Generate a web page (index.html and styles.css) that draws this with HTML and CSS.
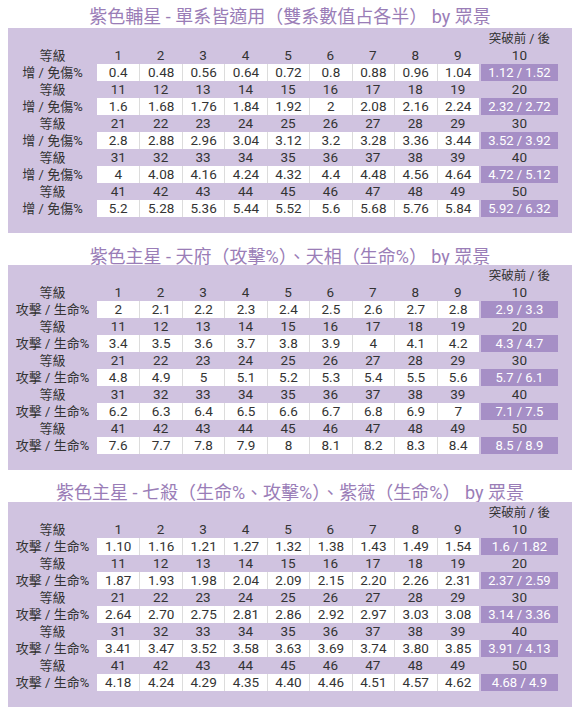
FILE: index.html
```html
<!DOCTYPE html>
<html lang="zh-Hant">
<head>
<meta charset="utf-8">
<title>紫色星 數值表</title>
<link rel="stylesheet" href="styles.css">
</head>
<body>
<div class="page">
  <h2 class="title t1">紫色輔星 - 單系皆適用（雙系數值占各半） by 眾景</h2>
  <div class="panel">
    <div class="row head"><span class="c10">突破前 / 後</span></div>
    <div class="row"><span class="lab">等級</span><span>1</span><span>2</span><span>3</span><span>4</span><span>5</span><span>6</span><span>7</span><span>8</span><span>9</span><span class="c10">10</span></div>
    <div class="row val"><span class="lab">增 / 免傷%</span><span>0.4</span><span>0.48</span><span>0.56</span><span>0.64</span><span>0.72</span><span>0.8</span><span>0.88</span><span>0.96</span><span>1.04</span><span class="c10 hi">1.12 / 1.52</span></div>
    <div class="row"><span class="lab">等級</span><span>11</span><span>12</span><span>13</span><span>14</span><span>15</span><span>16</span><span>17</span><span>18</span><span>19</span><span class="c10">20</span></div>
    <div class="row val"><span class="lab">增 / 免傷%</span><span>1.6</span><span>1.68</span><span>1.76</span><span>1.84</span><span>1.92</span><span>2</span><span>2.08</span><span>2.16</span><span>2.24</span><span class="c10 hi">2.32 / 2.72</span></div>
    <div class="row"><span class="lab">等級</span><span>21</span><span>22</span><span>23</span><span>24</span><span>25</span><span>26</span><span>27</span><span>28</span><span>29</span><span class="c10">30</span></div>
    <div class="row val"><span class="lab">增 / 免傷%</span><span>2.8</span><span>2.88</span><span>2.96</span><span>3.04</span><span>3.12</span><span>3.2</span><span>3.28</span><span>3.36</span><span>3.44</span><span class="c10 hi">3.52 / 3.92</span></div>
    <div class="row"><span class="lab">等級</span><span>31</span><span>32</span><span>33</span><span>34</span><span>35</span><span>36</span><span>37</span><span>38</span><span>39</span><span class="c10">40</span></div>
    <div class="row val"><span class="lab">增 / 免傷%</span><span>4</span><span>4.08</span><span>4.16</span><span>4.24</span><span>4.32</span><span>4.4</span><span>4.48</span><span>4.56</span><span>4.64</span><span class="c10 hi">4.72 / 5.12</span></div>
    <div class="row"><span class="lab">等級</span><span>41</span><span>42</span><span>43</span><span>44</span><span>45</span><span>46</span><span>47</span><span>48</span><span>49</span><span class="c10">50</span></div>
    <div class="row val"><span class="lab">增 / 免傷%</span><span>5.2</span><span>5.28</span><span>5.36</span><span>5.44</span><span>5.52</span><span>5.6</span><span>5.68</span><span>5.76</span><span>5.84</span><span class="c10 hi">5.92 / 6.32</span></div>
  </div>

  <h2 class="title t2">紫色主星 - 天府（攻擊%）、天相（生命%） by 眾景</h2>
  <div class="panel">
    <div class="row head"><span class="c10">突破前 / 後</span></div>
    <div class="row"><span class="lab">等級</span><span>1</span><span>2</span><span>3</span><span>4</span><span>5</span><span>6</span><span>7</span><span>8</span><span>9</span><span class="c10">10</span></div>
    <div class="row val"><span class="lab">攻擊 / 生命%</span><span>2</span><span>2.1</span><span>2.2</span><span>2.3</span><span>2.4</span><span>2.5</span><span>2.6</span><span>2.7</span><span>2.8</span><span class="c10 hi">2.9 / 3.3</span></div>
    <div class="row"><span class="lab">等級</span><span>11</span><span>12</span><span>13</span><span>14</span><span>15</span><span>16</span><span>17</span><span>18</span><span>19</span><span class="c10">20</span></div>
    <div class="row val"><span class="lab">攻擊 / 生命%</span><span>3.4</span><span>3.5</span><span>3.6</span><span>3.7</span><span>3.8</span><span>3.9</span><span>4</span><span>4.1</span><span>4.2</span><span class="c10 hi">4.3 / 4.7</span></div>
    <div class="row"><span class="lab">等級</span><span>21</span><span>22</span><span>23</span><span>24</span><span>25</span><span>26</span><span>27</span><span>28</span><span>29</span><span class="c10">30</span></div>
    <div class="row val"><span class="lab">攻擊 / 生命%</span><span>4.8</span><span>4.9</span><span>5</span><span>5.1</span><span>5.2</span><span>5.3</span><span>5.4</span><span>5.5</span><span>5.6</span><span class="c10 hi">5.7 / 6.1</span></div>
    <div class="row"><span class="lab">等級</span><span>31</span><span>32</span><span>33</span><span>34</span><span>35</span><span>36</span><span>37</span><span>38</span><span>39</span><span class="c10">40</span></div>
    <div class="row val"><span class="lab">攻擊 / 生命%</span><span>6.2</span><span>6.3</span><span>6.4</span><span>6.5</span><span>6.6</span><span>6.7</span><span>6.8</span><span>6.9</span><span>7</span><span class="c10 hi">7.1 / 7.5</span></div>
    <div class="row"><span class="lab">等級</span><span>41</span><span>42</span><span>43</span><span>44</span><span>45</span><span>46</span><span>47</span><span>48</span><span>49</span><span class="c10">50</span></div>
    <div class="row val"><span class="lab">攻擊 / 生命%</span><span>7.6</span><span>7.7</span><span>7.8</span><span>7.9</span><span>8</span><span>8.1</span><span>8.2</span><span>8.3</span><span>8.4</span><span class="c10 hi">8.5 / 8.9</span></div>
  </div>

  <h2 class="title t3">紫色主星 - 七殺（生命%、攻擊%）、紫薇（生命%） by 眾景</h2>
  <div class="panel">
    <div class="row head"><span class="c10">突破前 / 後</span></div>
    <div class="row"><span class="lab">等級</span><span>1</span><span>2</span><span>3</span><span>4</span><span>5</span><span>6</span><span>7</span><span>8</span><span>9</span><span class="c10">10</span></div>
    <div class="row val"><span class="lab">攻擊 / 生命%</span><span>1.10</span><span>1.16</span><span>1.21</span><span>1.27</span><span>1.32</span><span>1.38</span><span>1.43</span><span>1.49</span><span>1.54</span><span class="c10 hi">1.6 / 1.82</span></div>
    <div class="row"><span class="lab">等級</span><span>11</span><span>12</span><span>13</span><span>14</span><span>15</span><span>16</span><span>17</span><span>18</span><span>19</span><span class="c10">20</span></div>
    <div class="row val"><span class="lab">攻擊 / 生命%</span><span>1.87</span><span>1.93</span><span>1.98</span><span>2.04</span><span>2.09</span><span>2.15</span><span>2.20</span><span>2.26</span><span>2.31</span><span class="c10 hi">2.37 / 2.59</span></div>
    <div class="row"><span class="lab">等級</span><span>21</span><span>22</span><span>23</span><span>24</span><span>25</span><span>26</span><span>27</span><span>28</span><span>29</span><span class="c10">30</span></div>
    <div class="row val"><span class="lab">攻擊 / 生命%</span><span>2.64</span><span>2.70</span><span>2.75</span><span>2.81</span><span>2.86</span><span>2.92</span><span>2.97</span><span>3.03</span><span>3.08</span><span class="c10 hi">3.14 / 3.36</span></div>
    <div class="row"><span class="lab">等級</span><span>31</span><span>32</span><span>33</span><span>34</span><span>35</span><span>36</span><span>37</span><span>38</span><span>39</span><span class="c10">40</span></div>
    <div class="row val"><span class="lab">攻擊 / 生命%</span><span>3.41</span><span>3.47</span><span>3.52</span><span>3.58</span><span>3.63</span><span>3.69</span><span>3.74</span><span>3.80</span><span>3.85</span><span class="c10 hi">3.91 / 4.13</span></div>
    <div class="row"><span class="lab">等級</span><span>41</span><span>42</span><span>43</span><span>44</span><span>45</span><span>46</span><span>47</span><span>48</span><span>49</span><span class="c10">50</span></div>
    <div class="row val"><span class="lab">攻擊 / 生命%</span><span>4.18</span><span>4.24</span><span>4.29</span><span>4.35</span><span>4.40</span><span>4.46</span><span>4.51</span><span>4.57</span><span>4.62</span><span class="c10 hi">4.68 / 4.9</span></div>
  </div>
</div>
</body>
</html>
```
FILE: styles.css
```css
html, body {
  margin: 0;
  padding: 0;
  background: #ffffff;
}
body {
  font-family: Roboto, "Noto Sans CJK TC", sans-serif;
  color: #333333;
}
.page {
  width: 584px;
  display: flex;
  flex-direction: column;
}
.title {
  margin: 0 0 0 8px;
  width: 564px;
  font-family: Roboto, "Noto Sans CJK TC", sans-serif;
  font-size: 18px;
  font-weight: 400;
  line-height: 20px;
  text-align: center;
  color: #9a7db7;
  white-space: nowrap;
}
.t1 { padding-top: 7px; height: 21px; }
.t2 { padding-top: 14px; height: 18px; }
.t3 { padding-top: 13px; height: 19px; }
.panel {
  margin-left: 8px;
  width: 564px;
  height: 205px;
  box-sizing: border-box;
  padding: 2px 0 16px 0;
  background: #d0c3e0;
}
.row {
  display: grid;
  grid-template-columns: 89px repeat(9, 42.44px) 79px;
  height: 17px;
  font-size: 13.5px;
  line-height: 17px;
}
.row > span {
  text-align: center;
  white-space: nowrap;
}
.row .lab {
  grid-column: 1;
  font-size: 13px;
}
.row .c10 {
  grid-column: 11;
  margin-left: 2px;
}
.head .c10 {
  font-size: 12.5px;
}
.val .hi {
  font-size: 13px;
}
.val > span:not(.lab):not(.c10) {
  background: #ffffff;
}
.val > span:nth-child(n+3):not(.c10) {
  border-left: 1px solid #dcdcdc;
}
.val .hi {
  background: #a68fc6;
  color: #ffffff;
}
```
